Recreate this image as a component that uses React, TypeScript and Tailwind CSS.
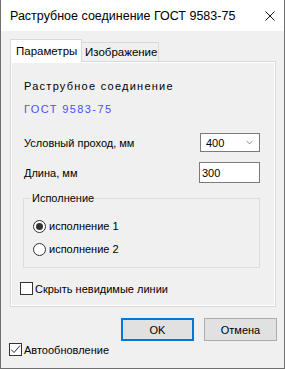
import { ChevronDown } from "lucide-react";

function Radio({ checked, label }: { checked?: boolean; label: string }) {
    return (
        <div className="flex items-center h-[14px] ml-[9px]">
            <span className="w-[13px] h-[13px] rounded-full border border-[#333] bg-white flex items-center justify-center">
                {checked && <span className="w-[7px] h-[7px] rounded-full bg-[#333]" />}
            </span>
            <span className="ml-[3px]">{label}</span>
        </div>
    );
}

function CheckBox({ checked, label }: { checked?: boolean; label: string }) {
    return (
        <div className="flex items-center h-[13px]">
            <span className="w-[13px] h-[13px] border border-[#333] bg-white flex items-center justify-center">
                {checked && (
                    <svg width="11" height="11" viewBox="0 0 11 11">
                        <path d="M1 5.5 L4 8.5 L10 1.5" fill="none" stroke="#333" strokeWidth="1" />
                    </svg>
                )}
            </span>
            <span className="ml-[2px]">{label}</span>
        </div>
    );
}

export default function App() {
    return (
        <div className="w-[285px] h-[369px] bg-[#f0f0f0] border-x border-b border-[#6f6f6f] flex flex-col font-['Liberation_Sans',Arial,sans-serif] text-[11px] leading-[14px] text-black">
            {/* title bar */}
            <div className="h-[31px] bg-white flex items-center pl-[9px] pr-[9px] shrink-0">
                <span className="text-[12.5px]">Раструбное соединение ГОСТ 9583-75</span>
                <svg className="ml-auto" width="10" height="10" viewBox="0 0 10 10">
                    <path d="M0.5 0.5 L9.5 9.5 M9.5 0.5 L0.5 9.5" stroke="#111" strokeWidth="1" />
                </svg>
            </div>

            {/* tabs */}
            <div className="flex items-end pl-[9px] pt-[8px] h-[30px] shrink-0">
                <div className="relative z-10 -mb-px w-[72px] h-[23px] bg-white border border-b-0 border-[#d9d9d9] pl-[5px] pt-[4px] text-[11.5px]">
                    Параметры
                </div>
                <div className="w-[77px] h-[19px] bg-[#f0f0f0] border border-l-0 border-b-0 border-[#d9d9d9] pl-[3px] pt-[2px] text-[11.5px]">
                    Изображение
                </div>
            </div>

            {/* tab page */}
            <div className="ml-[9px] w-[266px] h-[246px] border border-[#d9d9d9] shadow-[inset_1px_1px_0_#fff,inset_-1px_-1px_0_#fff] pl-[12px] pr-[15px] pt-[17px] flex flex-col shrink-0">
                <div className="ml-[1px] text-[11px] tracking-[1.25px]">Раструбное соединение</div>
                <div className="ml-[1px] mt-[9px] text-[11px] tracking-[1.4px] text-[#4d4dff]">ГОСТ 9583-75</div>

                <div className="mt-[17px] ml-[1px] flex items-center justify-between h-[19px]">
                    <span>Условный проход, мм</span>
                    <div className="w-[60px] h-[19px] border border-[#7a7a7a] bg-white flex items-center pl-[5px] pr-[4px]">
                        <span>400</span>
                        <ChevronDown className="ml-auto w-[11px] h-[11px] text-[#555]" strokeWidth={1.5} />
                    </div>
                </div>

                <div className="mt-[10px] ml-[1px] flex items-center justify-between h-[21px]">
                    <span>Длина, мм</span>
                    <div className="w-[61px] h-[21px] border border-[#7a7a7a] bg-white flex items-center pl-[2px]">
                        300
                    </div>
                </div>

                <fieldset className="mt-[8px] border border-[#dcdcdc] pb-[11px]">
                    <legend className="ml-[7px] px-[1px]">Исполнение</legend>
                    <div className="mt-[14px]">
                        <Radio checked label="исполнение 1" />
                    </div>
                    <div className="mt-[9px]">
                        <Radio label="исполнение 2" />
                    </div>
                </fieldset>

                <div className="mt-[14px] -ml-[3px]">
                    <CheckBox label="Скрыть невидимые линии" />
                </div>
            </div>

            {/* buttons */}
            <div className="mt-[11px] flex justify-end gap-[10px] pr-[7px] shrink-0">
                <button className="w-[73px] h-[23px] bg-[#e1e1e1] border-2 border-[#0078d7] flex items-center justify-center">
                    OK
                </button>
                <button className="w-[73px] h-[23px] bg-[#e1e1e1] border border-[#adadad] flex items-center justify-center">
                    Отмена
                </button>
            </div>

            <div className="mt-[2px] ml-[8px]">
                <CheckBox checked label="Автообновление" />
            </div>
        </div>
    );
}
